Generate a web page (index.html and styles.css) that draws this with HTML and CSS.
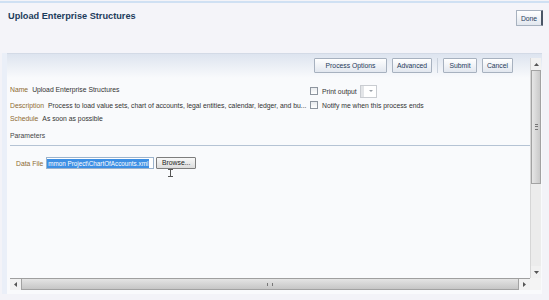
FILE: index.html
```html
<!DOCTYPE html>
<html lang="en">
<head>
  <meta charset="UTF-8" />
  <title>Upload Enterprise Structures</title>
  <link rel="stylesheet" href="styles.css">
</head>
<body>

  <div class="topline"></div>

  <div class="header">
    <h1 class="title">Upload Enterprise Structures</h1>
    <button class="btn done">Done</button>
  </div>

  <div class="frame">
    <div class="panel">
      <div class="content">

        <div class="toolbar">
          <button class="btn wide">Process Options</button>
          <button class="btn adv">Advanced</button>
          <span class="sep"></span>
          <button class="btn submit">Submit</button>
          <button class="btn cancel">Cancel</button>
        </div>

        <div class="form">
          <div class="col-left">
            <div class="row first"><span class="label">Name</span><span class="value">Upload Enterprise Structures</span></div>
            <div class="row"><span class="label">Description</span><span class="value">Process to load value sets, chart of accounts, legal entities, calendar, ledger, and bu...</span></div>
            <div class="row"><span class="label">Schedule</span><span class="value">As soon as possible</span></div>
          </div>
          <div class="col-right">
            <div class="check-row">
              <span class="box"></span>
              <span class="value">Print output</span>
              <span class="select"><span class="select-arrow"></span></span>
            </div>
            <div class="check-row">
              <span class="box"></span>
              <span class="value">Notify me when this process ends</span>
            </div>
          </div>
        </div>

        <div class="section">Parameters</div>

        <div class="param-row">
          <span class="label">Data File</span>
          <span class="file-input"><span class="selected">mmon Project\ChartOfAccounts.xml</span></span>
          <button class="btn browse">Browse...</button>
        </div>
        <div class="cursor">
          <svg width="7" height="8" viewBox="0 0 7 8"><path d="M1 0.5h5M3.5 0.5v7M1 7.5h5" stroke="#555" stroke-width="1" fill="none"/></svg>
        </div>

      </div>

      <div class="vscroll">
        <div class="arrow-box">
          <svg width="7" height="5" viewBox="0 0 7 5"><path d="M1 4L3.5 1L6 4z" fill="#555"/></svg>
        </div>
        <div class="vthumb"><span class="grip-h"></span></div>
        <div class="vtrack"></div>
        <div class="arrow-box">
          <svg width="7" height="5" viewBox="0 0 7 5"><path d="M1 1L3.5 4L6 1z" fill="#555"/></svg>
        </div>
      </div>

      <div class="hscroll">
        <div class="arrow-box">
          <svg width="5" height="7" viewBox="0 0 5 7"><path d="M4 1L1 3.5L4 6z" fill="#555"/></svg>
        </div>
        <div class="hthumb"><span class="grip-v"></span></div>
        <div class="arrow-box">
          <svg width="5" height="7" viewBox="0 0 5 7"><path d="M1 1L4 3.5L1 6z" fill="#555"/></svg>
        </div>
      </div>

      <div class="corner"></div>
    </div>
  </div>

</body>
</html>
```

FILE: styles.css
```css
body {
  margin: 0;
  background: #f3f3f8;
  font-family: 'Liberation Sans', Arial, sans-serif;
  font-size: 6.8px;
  color: #3a3a3a;
}

.topline {
  height: 2px;
  margin-top: 1px;
  background: #cfe0f3;
}

.header {
  display: flex;
  justify-content: space-between;
  align-items: flex-start;
  height: 43px;
  padding: 7px 6px 0 8px;
  background: #f4f4f9;
}

.title {
  margin: 0;
  font-size: 9.2px;
  line-height: 12px;
  font-weight: bold;
  color: #1d3c5c;
}

.btn {
  font-family: inherit;
  font-size: 6.8px;
  color: #1f3a5a;
  background: linear-gradient(#ffffff, #e2e7ef);
  border: 1px solid #a7b1bf;
  border-radius: 1px;
  padding: 0;
  height: 15px;
  line-height: 13px;
  text-align: center;
}

.done {
  width: 27px;
  height: 16px;
  border-right: 2px solid #4a5666;
}

.frame {
  margin-left: 2px;
  border-left: 5px solid #eaeff8;
}

.panel {
  width: 530px;
  height: 232px;
  padding: 4px 2px 4px 3px;
  border-top: 1px solid #d3dae6;
  background: linear-gradient(#dde4ef, #f9fafc 24px);
  display: grid;
  grid-template-columns: 520px 11px;
  grid-template-rows: 220px 12px;
}

.content {
  overflow: hidden;
}

.toolbar {
  display: flex;
  justify-content: flex-end;
  align-items: center;
  gap: 5px;
  padding-right: 17px;
}

.wide { width: 73px; }
.adv { width: 40px; }
.submit { width: 34px; }
.cancel { width: 31px; }

.sep {
  width: 1px;
  height: 15px;
  background: #c9d1dc;
}

.form {
  display: flex;
  margin-top: 10px;
}

.col-left {
  width: 300px;
}

.row {
  line-height: 13px;
  white-space: nowrap;
}

.row.first {
  margin-bottom: 3px;
}

.label {
  color: #8e6a32;
  margin-right: 4px;
}

.value {
  color: #333;
}

.col-right {
  padding-top: 1px;
}

.check-row {
  display: flex;
  align-items: center;
  gap: 4px;
  height: 14px;
  white-space: nowrap;
}

.box {
  width: 6px;
  height: 6px;
  border: 1px solid #8e959f;
  background: linear-gradient(#e9ebee, #ffffff);
}

.select {
  display: inline-flex;
  align-items: center;
  justify-content: flex-end;
  width: 15px;
  height: 11px;
  border: 1px solid #c9ccd1;
  background: #fff;
  margin-left: -1px;
  box-shadow: inset 3px 0 0 #e3e5e8;
}

.select-arrow {
  width: 0;
  height: 0;
  margin-right: 3px;
  border-left: 2px solid transparent;
  border-right: 2px solid transparent;
  border-top: 2px solid #9aa0a8;
}

.section {
  margin-top: 5px;
  line-height: 12px;
  padding-bottom: 3px;
  border-bottom: 1px solid #b5c3d4;
  color: #454545;
}

.param-row {
  display: flex;
  align-items: center;
  margin-top: 11px;
  padding-left: 6px;
  white-space: nowrap;
}

.param-row .label {
  margin-right: 3px;
}

.file-input {
  width: 106px;
  height: 10px;
  border: 1px solid #9cb3cc;
  background: #fff;
  overflow: hidden;
  display: flex;
  align-items: center;
}

.selected {
  background: #3d8fe4;
  color: #fff;
  font-size: 6.3px;
  line-height: 9px;
  padding: 0 1px;
}

.browse {
  width: 40px;
  height: 12px;
  line-height: 10px;
  margin-left: 2px;
  color: #222;
  background: linear-gradient(#f8f8f8, #dcdcdc);
  border: 1px solid #7d7d7d;
}

.cursor {
  padding-left: 157px;
  line-height: 0;
}

.vscroll {
  display: flex;
  flex-direction: column;
  background: #ececec;
  border-left: 1px solid #d6d6d6;
}

.arrow-box {
  display: flex;
  align-items: center;
  justify-content: center;
  flex: 0 0 12px;
  background: #f1f1f1;
}

.vthumb {
  height: 112px;
  display: flex;
  align-items: center;
  justify-content: center;
  border: 1px solid #a2a2a2;
  background: linear-gradient(to right, #e6e6e6, #c9c9c9);
}

.grip-h {
  width: 3px;
  height: 4px;
  border-top: 1px solid #777;
  border-bottom: 1px solid #777;
  background: linear-gradient(transparent 1px, #777 1px, #777 2px, transparent 2px);
}

.vtrack {
  flex: 1;
}

.hscroll {
  display: flex;
  background: #ececec;
  border-top: 1px solid #9f9f9f;
}

.hscroll .arrow-box {
  flex: 0 0 11px;
}

.hthumb {
  flex: 1;
  display: flex;
  align-items: center;
  justify-content: center;
  border: 1px solid #a2a2a2;
  border-top: none;
  background: linear-gradient(#e4e4e4, #c6c6c6);
}

.grip-v {
  width: 4px;
  height: 3px;
  border-left: 1px solid #777;
  border-right: 1px solid #777;
}

.corner {
  background: #f4f4f4;
}
```
